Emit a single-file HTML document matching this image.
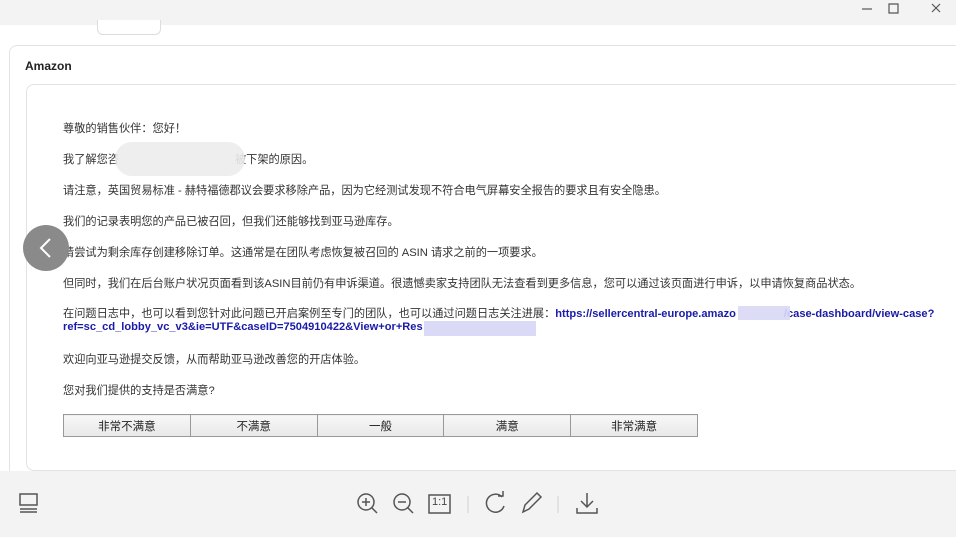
<!DOCTYPE html><html><head><meta charset="utf-8"><style>
body{margin:0;width:956px;height:537px;overflow:hidden;background:#f3f3f3;font-family:"Liberation Sans","Noto Sans CJK SC",sans-serif;position:relative}
.a{position:absolute}
.main{left:0;top:25px;width:956px;height:446px;background:#fff;overflow:hidden}
.outer{left:9px;top:20px;width:960px;height:440px;border:1px solid #e3e3e3;border-radius:8px;background:#fff}
.inner{left:26px;top:84px;width:940px;height:385px;border:1px solid #e3e3e3;border-radius:8px;background:#fff}
.t{position:absolute;left:63px;font-size:11.2px;color:#333;white-space:nowrap}
.link{color:#1a1aa8;font-weight:bold;font-size:11.1px}
table{position:absolute;left:63px;top:414px;border-collapse:collapse;width:635px}
td{border:1px solid #999;background:linear-gradient(#f7f7f7,#e8e8e8);height:21px;text-align:center;font-size:11.5px;color:#222;width:127px;padding:0}
.blur{position:absolute;background:#e6e6ee;opacity:.9}
svg{position:absolute}
</style></head><body>
<div class="a" style="left:97px;top:20px;width:62px;height:14px;border:1px solid #ddd;border-top:none;border-radius:0 0 6px 6px;background:#fff;z-index:2"></div>
<div class="a main"><div class="a outer"></div></div>
<div class="a" style="left:25px;top:59px;font-size:12px;font-weight:bold;color:#222">Amazon</div>
<div class="a inner"></div>
<div class="t" style="top:120px">尊敬的销售伙伴：您好！</div>
<div class="t" style="top:151px">我了解您咨<span style="display:inline-block;width:116px"></span>被下架的原因。</div>
<div class="blur" style="left:115px;top:142px;width:130px;height:34px;border-radius:17px;background:#ececec"></div>
<div class="t" style="top:182px">请注意，英国贸易标准 - 赫特福德郡议会要求移除产品，因为它经测试发现不符合电气屏幕安全报告的要求且有安全隐患。</div>
<div class="t" style="top:213px">我们的记录表明您的产品已被召回，但我们还能够找到亚马逊库存。</div>
<div class="t" style="top:244px">请尝试为剩余库存创建移除订单。这通常是在团队考虑恢复被召回的 ASIN 请求之前的一项要求。</div>
<div class="t" style="top:275px">但同时，我们在后台账户状况页面看到该ASIN目前仍有申诉渠道。很遗憾卖家支持团队无法查看到更多信息，您可以通过该页面进行申诉，以申请恢复商品状态。</div>
<div class="t" style="top:305px">在问题日志中，也可以看到您针对此问题已开启案例至专门的团队，也可以通过问题日志关注进展：<span class="link">https://sellercentral-europe.amazo<span style="display:inline-block;width:48px"></span>/case-dashboard/view-case?</span></div>
<div class="t link" style="top:321px">ref=sc_cd_lobby_vc_v3&amp;ie=UTF&amp;caseID=7504910422&amp;View+or+Res</div>
<div class="blur" style="left:738px;top:306px;width:52px;height:14px;background:#d8d8f6"></div>
<div class="blur" style="left:424px;top:321px;width:112px;height:15px;background:#d6d6f6"></div>
<div class="t" style="top:351px">欢迎向亚马逊提交反馈，从而帮助亚马逊改善您的开店体验。</div>
<div class="t" style="top:382px">您对我们提供的支持是否满意?</div>
<table><tr><td>非常不满意</td><td>不满意</td><td>一般</td><td>满意</td><td>非常满意</td></tr></table>
<div class="a" style="left:23px;top:225px;width:46px;height:46px;border-radius:50%;background:#8a8a8a"></div>
<svg style="left:23px;top:225px" width="46" height="46"><path d="M27 14 L18 23 L27 32" stroke="#fff" stroke-width="2" fill="none"/></svg>
<svg style="left:860px;top:0" width="96" height="18" fill="none" stroke="#555" stroke-width="1.2"><path d="M2 9h10"/><path d="M29 4h9v9h-9z"/><path d="M72 4l8 8M80 4l-8 8"/></svg>
<svg style="left:0;top:471px" width="956" height="66" fill="none" stroke="#555" stroke-width="1.5">
<rect x="20" y="23" width="17" height="11"/><path d="M20 38h17M20 41h17"/>
<circle cx="366" cy="31" r="8"/><path d="M372 37l5 5M362 31h8M366 27v8"/>
<circle cx="402" cy="31" r="8"/><path d="M408 37l5 5M398 31h8"/>
<rect x="429" y="24" width="21" height="18"/>
<path d="M468 25v17" stroke="#ddd"/>
<path d="M502 26a9 9 0 1 0 2 9"/><path d="M498 25h5v-5"/>
<path d="M523 41l2-7 12-12 4 4-12 12z"/>
<path d="M558 25v17" stroke="#ddd"/>
<path d="M587 22v14M581 30l6 6 6-6M577 37v5h20v-5"/>
</svg>
<div class="a" style="left:432px;top:496px;font-size:11px;color:#444">1:1</div>
</body></html>
